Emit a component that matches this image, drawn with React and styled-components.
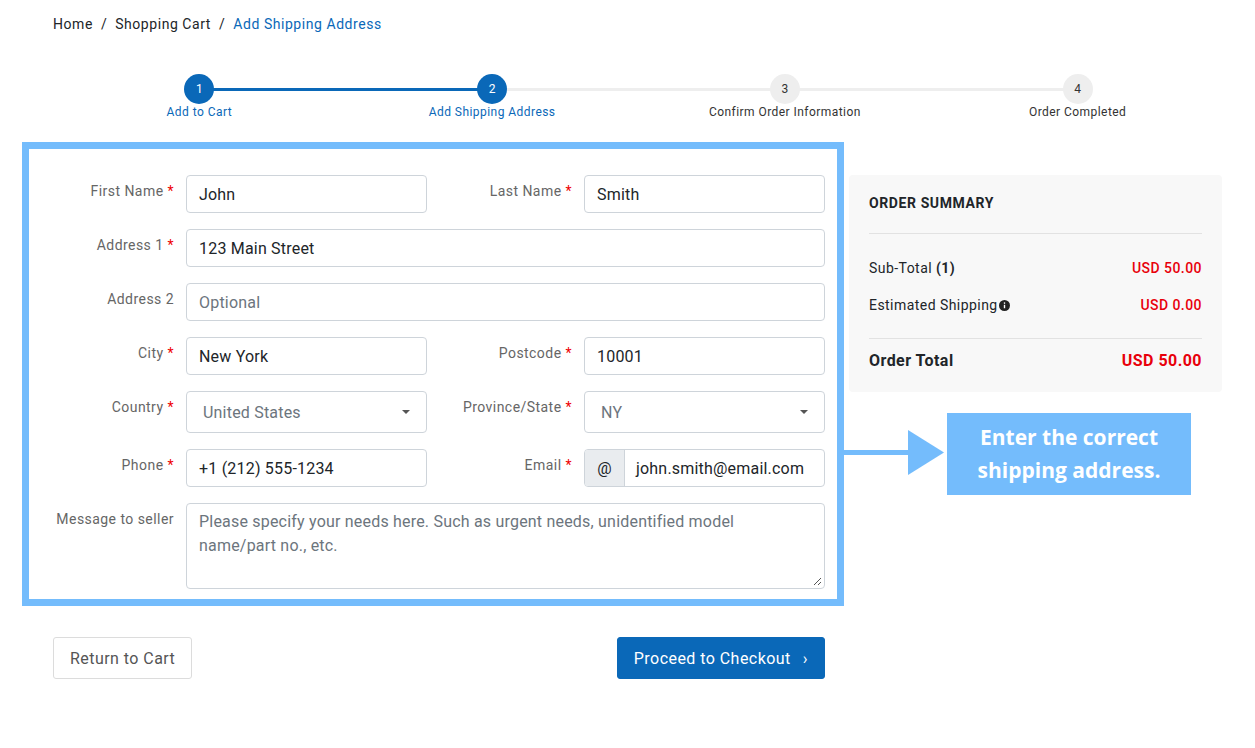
import React from 'react'
import styled, { createGlobalStyle } from 'styled-components'

const Global = createGlobalStyle`
  body { margin: 0; font-family: Roboto, "Liberation Sans", sans-serif; color: #212529; background: #fff; }
  * { box-sizing: border-box; }
`

const Page = styled.div`
  padding: 14px 31px 0 53px;
`

const Crumbs = styled.div`
  font-size: 14px;
  letter-spacing: 0.55px;
  height: 20px;
  line-height: 20px;
  span { color: #212529; }
  b { font-weight: 400; color: #0a68b8; }
  i { font-style: normal; margin: 0 8px; }
`

const Steps = styled.div`
  display: grid;
  grid-template-columns: repeat(4, 1fr);
  margin-top: 40px;
  height: 68px;
`

const Step = styled.div`
  position: relative;
  display: flex;
  flex-direction: column;
  align-items: center;
  &::before {
    content: '';
    position: absolute;
    top: 14px;
    left: 50%;
    width: 100%;
    height: 3px;
    background: ${p => (p.$done ? '#0a68b8' : '#eeeeee')};
    display: ${p => (p.$last ? 'none' : 'block')};
  }
`

const Dot = styled.div`
  position: relative;
  z-index: 1;
  width: 30px;
  height: 30px;
  border-radius: 50%;
  background: ${p => (p.$active ? '#0a68b8' : '#eeeeee')};
  color: ${p => (p.$active ? '#fff' : '#333')};
  font-size: 12px;
  display: flex;
  align-items: center;
  justify-content: center;
`

const StepLabel = styled.div`
  font-size: 12px;
  margin-top: 1px;
  letter-spacing: 0.45px;
  color: ${p => (p.$active ? '#0a68b8' : '#333')};
`

const Main = styled.div`
  display: flex;
  align-items: flex-start;
  margin-left: -31px;
  gap: 5px;
`

const FormBox = styled.div`
  width: 822px;
  border: 7px solid #74bcfc;
  padding: 26px 12px 10px 11px;
`

const Grid = styled.div`
  display: grid;
  grid-template-columns: 134px 241px 133px 241px;
  column-gap: 12px;
  row-gap: 16px;
`

const Label = styled.label`
  text-align: right;
  font-size: 14px;
  color: #666;
  padding-top: 8px;
  letter-spacing: 0.45px;
  em { color: #e00; font-style: normal; margin-left: 4px; }
`

const Input = styled.div`
  grid-column: ${p => p.$span ? 'span 3' : 'auto'};
  height: ${p => p.$h || 38}px;
  border: 1px solid #ced4da;
  border-radius: 4px;
  padding: 0 ${p => p.$pl || 12}px;
  display: flex;
  align-items: center;
  font-size: 16px;
  letter-spacing: 0.2px;
  color: ${p => (p.$ph ? '#6c757d' : '#212529')};
  position: relative;
`

const Caret = styled.span`
  margin-left: auto;
  width: 0;
  height: 0;
  border-left: 4px solid transparent;
  border-right: 4px solid transparent;
  border-top: 4px solid #555;
`

const Group = styled.div`
  display: flex;
  height: 38px;
  border: 1px solid #ced4da;
  border-radius: 4px;
  overflow: hidden;
  font-size: 16px;
  letter-spacing: 0.2px;
`

const Addon = styled.div`
  width: 40px;
  background: #e9ecef;
  border-right: 1px solid #ced4da;
  display: flex;
  align-items: center;
  justify-content: center;
`

const GroupText = styled.div`
  display: flex;
  align-items: center;
  padding: 0 11px;
`

const Area = styled.div`
  grid-column: span 3;
  height: 86px;
  border: 1px solid #ced4da;
  border-radius: 4px;
  padding: 6px 12px;
  font-size: 16px;
  line-height: 24px;
  letter-spacing: 0.2px;
  color: #6c757d;
  position: relative;
  svg { position: absolute; right: 2px; bottom: 2px; }
`

const Side = styled.div`
  display: flex;
  flex-direction: column;
`

const Summary = styled.div`
  width: 373px;
  margin-top: 33px;
  background: #f8f8f8;
  border-radius: 4px;
  padding: 20px 20px 22px;
`

const SumTitle = styled.div`
  font-size: 14px;
  font-weight: 700;
  letter-spacing: 0.6px;
  padding-bottom: 22px;
  border-bottom: 1px solid #e2e2e2;
`

const SumRows = styled.div`
  padding: 26px 0 25px;
  border-bottom: 1px solid #e2e2e2;
  display: flex;
  flex-direction: column;
  gap: 21px;
`

const SumRow = styled.div`
  display: flex;
  justify-content: space-between;
  align-items: center;
  margin-top: ${p => (p.$big ? 12 : 0)}px;
  font-size: ${p => (p.$big ? 16 : 14)}px;
  font-weight: ${p => (p.$big ? 700 : 400)};
  letter-spacing: 0.45px;
  strong { font-weight: 700; }
`

const Price = styled.span`
  color: #e8000b;
  font-weight: ${p => (p.$big ? 700 : 500)};
`

const Callout = styled.div`
  display: flex;
  align-items: center;
  margin-top: 21px;
  margin-left: -5px;
`

const Note = styled.div`
  width: 244px;
  height: 82px;
  background: #74bcfc;
  color: #fff;
  font-family: "Open Sans", sans-serif;
  font-weight: 700;
  font-size: 21px;
  line-height: 33px;
  text-align: center;
  padding-top: 8px;
`

const Actions = styled.div`
  width: 772px;
  display: flex;
  justify-content: space-between;
  margin-top: 31px;
`

const Button = styled.button`
  height: 42px;
  padding: 0 16px;
  border-radius: 3px;
  font-family: Roboto, sans-serif;
  font-size: 16px;
  letter-spacing: 0.45px;
  border: 1px solid ${p => (p.$primary ? '#0a68b8' : '#dcdcdc')};
  background: ${p => (p.$primary ? '#0a68b8' : '#fff')};
  color: ${p => (p.$primary ? '#fff' : '#555')};
  display: flex;
  align-items: center;
  gap: 12px;
`

const steps = ['Add to Cart', 'Add Shipping Address', 'Confirm Order Information', 'Order Completed']

export default function App() {
  return (
    <Page>
      <Global />
      <Crumbs>
        <span>Home</span><i>/</i><span>Shopping Cart</span><i>/</i><b>Add Shipping Address</b>
      </Crumbs>
      <Steps>
        {steps.map((s, i) => (
          <Step key={s} $done={i === 0} $last={i === 3}>
            <Dot $active={i < 2}>{i + 1}</Dot>
            <StepLabel $active={i < 2}>{s}</StepLabel>
          </Step>
        ))}
      </Steps>
      <Main>
        <FormBox>
          <Grid>
            <Label>First Name<em>*</em></Label>
            <Input>John</Input>
            <Label>Last Name<em>*</em></Label>
            <Input>Smith</Input>
            <Label>Address 1<em>*</em></Label>
            <Input $span>123 Main Street</Input>
            <Label>Address 2</Label>
            <Input $span $ph>Optional</Input>
            <Label>City<em>*</em></Label>
            <Input>New York</Input>
            <Label>Postcode<em>*</em></Label>
            <Input>10001</Input>
            <Label>Country<em>*</em></Label>
            <Input $h={42} $pl={16} $ph>United States<Caret /></Input>
            <Label>Province/State<em>*</em></Label>
            <Input $h={42} $pl={16} $ph>NY<Caret /></Input>
            <Label>Phone<em>*</em></Label>
            <Input>+1 (212) 555-1234</Input>
            <Label>Email<em>*</em></Label>
            <Group>
              <Addon>@</Addon>
              <GroupText>john.smith@email.com</GroupText>
            </Group>
            <Label>Message to seller</Label>
            <Area>
              Please specify your needs here. Such as urgent needs, unidentified model name/part no., etc.
              <svg width="9" height="9" viewBox="0 0 9 9"><path d="M8 1 1 8M8 5 5 8" stroke="#555" strokeWidth="1" /></svg>
            </Area>
          </Grid>
        </FormBox>
        <Side>
          <Summary>
            <SumTitle>ORDER SUMMARY</SumTitle>
            <SumRows>
              <SumRow><span>Sub-Total <strong>(1)</strong></span><Price>USD 50.00</Price></SumRow>
              <SumRow>
                <span>Estimated Shipping
                  <svg width="11" height="11" viewBox="0 0 16 16" style={{ marginLeft: 1, verticalAlign: -1 }}>
                    <circle cx="8" cy="8" r="8" fill="#222" />
                    <rect x="7" y="7" width="2" height="5" fill="#fff" />
                    <circle cx="8" cy="4.5" r="1.2" fill="#fff" />
                  </svg>
                </span>
                <Price>USD 0.00</Price>
              </SumRow>
            </SumRows>
            <SumRow $big><span>Order Total</span><Price $big>USD 50.00</Price></SumRow>
          </Summary>
          <Callout>
            <svg width="103" height="48" viewBox="0 0 103 48">
              <rect x="0" y="20" width="70" height="5" fill="#74bcfc" />
              <polygon points="64,0 100,22.5 64,45" fill="#74bcfc" />
            </svg>
            <Note>Enter the correct<br />shipping address.</Note>
          </Callout>
        </Side>
      </Main>
      <Actions>
        <Button>Return to Cart</Button>
        <Button $primary>Proceed to Checkout <span>›</span></Button>
      </Actions>
    </Page>
  )
}
